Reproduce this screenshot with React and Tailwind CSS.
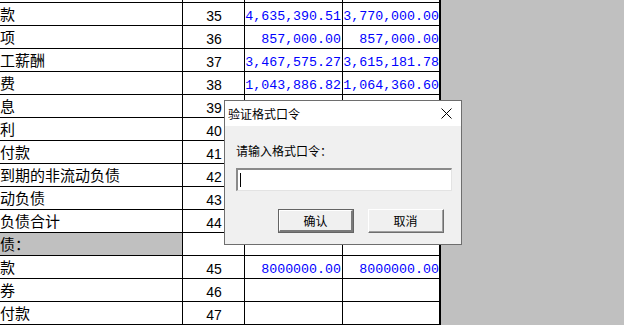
import React from "react";

const rows = [
  { label: "款", no: "35", a: "4,635,390.51", b: "3,770,000.00" },
  { label: "项", no: "36", a: "857,000.00", b: "857,000.00" },
  { label: "工薪酬", no: "37", a: "3,467,575.27", b: "3,615,181.78" },
  { label: "费", no: "38", a: "1,043,886.82", b: "1,064,360.60" },
  { label: "息", no: "39", a: "", b: "" },
  { label: "利", no: "40", a: "", b: "" },
  { label: "付款", no: "41", a: "", b: "" },
  { label: "到期的非流动负债", no: "42", a: "", b: "" },
  { label: "动负债", no: "43", a: "", b: "" },
  { label: "负债合计", no: "44", a: "", b: "" },
  { label: "债：", no: "", a: "", b: "", gray: true },
  { label: "款", no: "45", a: "8000000.00", b: "8000000.00" },
  { label: "券", no: "46", a: "", b: "" },
  { label: "付款", no: "47", a: "", b: "" },
];

const cjk = { fontFamily: '"Noto Sans CJK SC", "Noto Sans", sans-serif' };

const Row = ({ row }) => (
  <div className="flex h-[24px] border-b border-black">
    <div
      className={`w-[183px] shrink-0 border-r border-black flex items-center text-[15px] leading-none text-black ${row.gray ? "bg-[#c0c0c0]" : ""}`}
      style={cjk}
    >
      {row.label}
    </div>
    <div className="w-[62px] shrink-0 border-r border-black flex items-end justify-center pb-[2px] pl-[1px] text-[14px] leading-none font-['Liberation_Sans',sans-serif] text-black">
      {row.no}
    </div>
    <div className="w-[98px] shrink-0 border-r border-black flex items-end justify-end pb-[2px] pr-[1px] text-[13.3px] leading-none font-['Liberation_Mono',monospace] text-[#0000ff]">
      {row.a}
    </div>
    <div className="w-[98px] shrink-0 border-r-2 border-black flex items-end justify-end pb-[2px] text-[13.3px] leading-none font-['Liberation_Mono',monospace] text-[#0000ff]">
      {row.b}
    </div>
  </div>
);

const PasswordDialog = () => (
  <div className="absolute left-[224px] top-[100px] w-[238px] h-[145px] border border-[#6e6e6e] bg-[#f0f0f0] flex flex-col" style={cjk}>
    <div className="h-[25px] bg-white flex items-center justify-between pl-[3px] pr-[9px]">
      <span className="text-[12px] leading-none text-black">验证格式口令</span>
      <svg width="11" height="11" viewBox="0 0 11 11">
        <path d="M0.5 0.5 L10.5 10.5 M10.5 0.5 L0.5 10.5" stroke="#000" strokeWidth="1" />
      </svg>
    </div>
    <div className="flex flex-col pl-[11px] pt-[19px]">
      <span className="text-[12px] leading-none text-black">请输入格式口令：</span>
      <div className="mt-[11px] w-[216px] h-[23px] border-t-2 border-l-2 border-t-[#8a8a8a] border-l-[#8a8a8a] border-b border-r border-b-[#e3e3e3] border-r-[#e3e3e3] bg-white flex items-center pl-[2px]">
        <div className="w-[1px] h-[14px] bg-black" />
      </div>
      <div className="flex gap-[14px] mt-[18px] pl-[42px]">
        <button className="w-[76px] h-[24px] border border-[#646464] bg-[#f0f0f0] p-0">
          <div className="w-full h-full border-t border-l border-white border-b-2 border-r-2 border-b-[#7a7a7a] border-r-[#7a7a7a] flex items-center justify-center text-[12px] leading-none text-black">
            确认
          </div>
        </button>
        <button className="w-[76px] h-[24px] border-t border-l border-white border-b border-r border-b-[#6e6e6e] border-r-[#6e6e6e] bg-[#f0f0f0] p-0">
          <div className="w-full h-full border-b border-r border-b-[#a0a0a0] border-r-[#a0a0a0] flex items-center justify-center text-[12px] leading-none text-black">
            取消
          </div>
        </button>
      </div>
    </div>
  </div>
);

export default function App() {
  return (
    <div className="relative w-[624px] h-[325px] overflow-hidden bg-[#c0c0c0] flex">
      <div className="w-[441px] shrink-0 bg-white flex flex-col">
        <div className="flex h-[3px] border-b border-black">
          <div className="w-[183px] shrink-0 border-r border-black" />
          <div className="w-[62px] shrink-0 border-r border-black" />
          <div className="w-[98px] shrink-0 border-r border-black" />
          <div className="w-[98px] shrink-0 border-r-2 border-black" />
        </div>
        {rows.map((row, index) => (
          <Row key={index} row={row} />
        ))}
      </div>
      <PasswordDialog />
    </div>
  );
}
